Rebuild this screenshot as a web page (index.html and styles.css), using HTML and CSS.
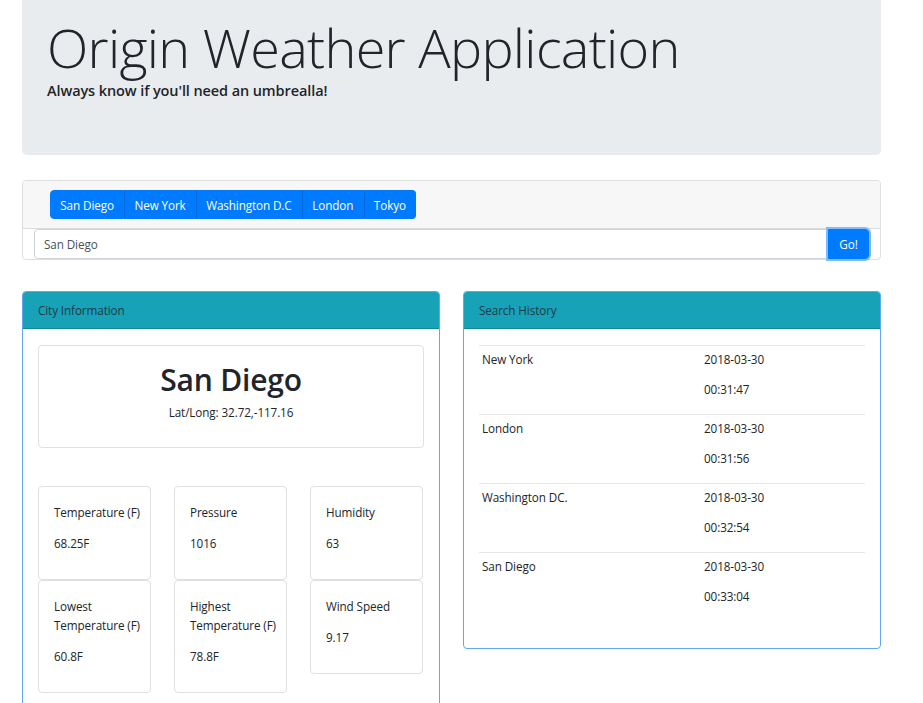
FILE: index.html
```html
<!DOCTYPE html>
<html lang="en">
<head>
<meta charset="utf-8">
<title>Origin Weather Application</title>
<link rel="stylesheet" href="styles.css">
</head>
<body>
<div class="page">
  <header class="jumbo">
    <h1 class="jumbo-title">Origin Weather Application</h1>
    <p class="jumbo-tag">Always know if you'll need an umbrealla!</p>
  </header>

  <section class="search-card">
    <div class="search-head">
      <div class="btn-group">
        <button class="city-btn">San Diego</button>
        <button class="city-btn">New York</button>
        <button class="city-btn">Washington D.C</button>
        <button class="city-btn">London</button>
        <button class="city-btn">Tokyo</button>
      </div>
    </div>
    <div class="search-body">
      <input class="city-input" type="text" value="San Diego">
      <button class="go-btn">Go!</button>
    </div>
  </section>

  <div class="cols">
    <section class="panel">
      <div class="panel-head">City Information</div>
      <div class="panel-body">
        <div class="city-card">
          <h2 class="city-name">San Diego</h2>
          <p class="city-coords">Lat/Long: 32.72,-117.16</p>
        </div>
        <div class="stats">
          <div class="stat"><p class="stat-label">Temperature (F)</p><p class="stat-value">68.25F</p></div>
          <div class="stat"><p class="stat-label">Pressure</p><p class="stat-value">1016</p></div>
          <div class="stat"><p class="stat-label">Humidity</p><p class="stat-value">63</p></div>
          <div class="stat"><p class="stat-label">Lowest Temperature (F)</p><p class="stat-value">60.8F</p></div>
          <div class="stat"><p class="stat-label">Highest Temperature (F)</p><p class="stat-value">78.8F</p></div>
          <div class="stat"><p class="stat-label">Wind Speed</p><p class="stat-value">9.17</p></div>
        </div>
      </div>
    </section>

    <section class="panel panel-history">
      <div class="panel-head">Search History</div>
      <div class="panel-body">
        <table class="history">
          <tbody>
            <tr><td class="h-city">New York</td><td class="h-time"><p>2018-03-30</p><p>00:31:47</p></td></tr>
            <tr><td class="h-city">London</td><td class="h-time"><p>2018-03-30</p><p>00:31:56</p></td></tr>
            <tr><td class="h-city">Washington DC.</td><td class="h-time"><p>2018-03-30</p><p>00:32:54</p></td></tr>
            <tr><td class="h-city">San Diego</td><td class="h-time"><p>2018-03-30</p><p>00:33:04</p></td></tr>
          </tbody>
        </table>
      </div>
    </section>
  </div>
</div>
</body>
</html>
```

FILE: styles.css
```css
* { box-sizing: border-box; }

html, body {
  margin: 0;
  background: #fff;
}

body {
  font-family: "Open Sans", "Noto Sans", sans-serif;
  font-size: 11.7px;
  letter-spacing: -0.1px;
  line-height: 19px;
  color: #212529;
}

.page {
  width: 859px;
  margin-left: 22px;
}

/* Jumbotron */
.jumbo {
  height: 155px;
  background: #e9ecef;
  border-radius: 0 0 5px 5px;
  padding: 16px 25px 0;
}

.jumbo-title {
  margin: 0;
  font-family: "Open Sans", sans-serif;
  font-weight: 300;
  font-size: 54px;
  letter-spacing: -0.7px;
  line-height: 62px;
  color: #212529;
}

.jumbo-tag {
  margin: 3px 0 0;
  font-weight: 600;
  font-size: 14.5px;
  letter-spacing: -0.1px;
  line-height: 19px;
  color: #212529;
}

/* Search card */
.search-card {
  margin-top: 25px;
  border: 1px solid #dfdfdf;
  border-radius: 4px;
  background: #fff;
}

.search-head {
  height: 48px;
  background: #f7f7f7;
  border-bottom: 1px solid #dcdcdc;
  border-radius: 4px 4px 0 0;
  padding: 9px 0 0 27px;
}

.btn-group {
  display: inline-flex;
}

.city-btn {
  height: 29px;
  padding: 0 9.3px;
  border: 1px solid #007bff;
  border-left-color: #0069d9;
  background: #007bff;
  color: #fff;
  font-family: inherit;
  font-size: 11.7px;
  letter-spacing: -0.1px;
  margin: 0;
}

.city-btn:first-child {
  border-left-color: #007bff;
  border-radius: 4px 0 0 4px;
}

.city-btn:last-child {
  border-radius: 0 4px 4px 0;
}

.search-body {
  display: flex;
  padding: 0 11px;
  height: 30px;
}

.city-input {
  flex: 1;
  height: 30px;
  border: 1px solid #ced4da;
  border-radius: 4px 0 0 4px;
  padding: 0 9px;
  font-family: inherit;
  font-size: 11.7px;
  letter-spacing: -0.1px;
  color: #495057;
  outline: none;
}

.go-btn {
  width: 41px;
  height: 30px;
  border: 1px solid #007bff;
  background: #007bff;
  color: #fff;
  font-family: inherit;
  font-size: 11.7px;
  border-radius: 0 4px 4px 0;
  box-shadow: 0 0 0 2px #80bdff;
}

/* Columns */
.cols {
  display: flex;
  gap: 23px;
  margin-top: 31px;
  align-items: flex-start;
}

.panel {
  width: 418px;
  border: 1px solid #5ea8f7;
  border-radius: 4px;
  background: #fff;
}

.panel-head {
  height: 37px;
  background: #17a2b8;
  border-bottom: 1px solid #128796;
  border-radius: 3px 3px 0 0;
  padding: 9px 15px 0;
  color: #1e3a44;
}

.panel-body {
  padding: 16px 15px 15px;
}

.city-card {
  border: 1px solid #e0e0e0;
  border-radius: 4px;
  height: 103px;
  text-align: center;
  padding-top: 15px;
}

.city-name {
  margin: 0;
  font-size: 30px;
  font-weight: 600;
  letter-spacing: -0.2px;
  line-height: 38px;
}

.city-coords {
  margin: 4px 0 0;
}

.stats {
  display: grid;
  grid-template-columns: repeat(3, 113px);
  column-gap: 23px;
  align-items: start;
  margin-top: 38px;
}

.stat {
  border: 1px solid #e0e0e0;
  border-radius: 4px;
  padding: 16px 8px 14px 15px;
}

.stat p {
  margin: 0 0 12px;
}

/* History table */
.history {
  width: 100%;
  border-collapse: collapse;
  margin-bottom: 12px;
}

.history td {
  border-top: 1px solid #e6e6e6;
  padding: 4px 3px;
  vertical-align: top;
}

.h-city {
  width: 222px;
}

.h-time p {
  margin: 0 0 11px;
}
```
